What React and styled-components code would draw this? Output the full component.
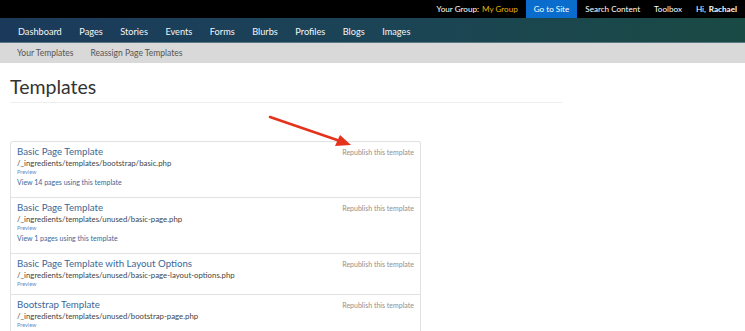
import React from "react";
import styled, { createGlobalStyle } from "styled-components";

const Global = createGlobalStyle`
  html, body { margin: 0; padding: 0; background: #fff; }
  body { font-family: Lato, "Open Sans", Arial, sans-serif; -webkit-font-smoothing: antialiased; }
  * { box-sizing: border-box; }
`;

const Page = styled.div`
  position: relative;
  width: 745px;
  height: 331px;
  overflow: hidden;
`;

const TopBar = styled.div`
  height: 18px;
  background: #000;
  display: flex;
  justify-content: flex-end;
  align-items: stretch;
  padding-right: 1px;
  font-size: 8.1px;
  color: #fff;
`;

const TopItem = styled.div`
  display: flex;
  align-items: center;
  padding: 0 7px;
  background: ${(p) => (p.$active ? "#0a6ccc" : "transparent")};
  ${(p) => p.$active && "padding: 0 8px; margin: 0 1px;"}
`;

const Gold = styled.span`
  color: #e8b400;
  margin-left: 3px;
`;

const Strong = styled.b`
  font-weight: 700;
  margin-left: 3px;
`;

const Nav = styled.nav`
  height: 25px;
  background: linear-gradient(90deg, #1b3a5b 0%, #1b4456 50%, #1a4a44 100%);
  border-bottom: 1px solid #5a7884;
  display: flex;
  align-items: center;
  gap: 17.5px;
  padding: 2px 0 0 18px;
  font-size: 9.2px;
  color: #f4f6f8;
`;

const SubNav = styled.div`
  height: 20px;
  background: #d9d9d9;
  display: flex;
  align-items: center;
  gap: 17px;
  padding-left: 17px;
  font-size: 8.5px;
  color: #555;
`;

const Content = styled.main`
  padding: 0 10px;
`;

const Heading = styled.h1`
  margin: 12px 0 0;
  width: 552px;
  font-size: 19.5px;
  font-weight: 400;
  line-height: 24px;
  color: #333;
  padding-bottom: 3px;
  border-bottom: 1px solid #eee;
`;

const List = styled.ul`
  list-style: none;
  margin: 38px 0 0;
  padding: 0;
  width: 411px;
  border: 1px solid #e2e2e2;
  border-bottom: none;
  border-radius: 3px 3px 0 0;
`;

const Item = styled.li`
  padding: 3px 6px 5px 6px;
  border-bottom: 1px solid #e2e2e2;
`;

const TitleRow = styled.div`
  display: flex;
  justify-content: space-between;
  align-items: center;
  height: 13px;
`;

const Title = styled.a`
  font-size: 9.7px;
  color: #3a6898;
  text-decoration: none;
  line-height: 13px;
`;

const Republish = styled.span`
  font-size: 7px;
  color: #8f8f8f;
`;

const Path = styled.div`
  font-size: 7.8px;
  color: #444;
  line-height: 10px;
`;

const Preview = styled.div`
  font-size: 5.5px;
  color: #5a8fd0;
  line-height: 9px;
`;

const View = styled.div`
  font-size: 7px;
  color: #3a6898;
  line-height: 10px;
  margin-bottom: 5px;
`;

const Arrow = styled.svg`
  position: absolute;
  left: 0;
  top: 0;
  pointer-events: none;
`;

const navItems = ["Dashboard", "Pages", "Stories", "Events", "Forms", "Blurbs", "Profiles", "Blogs", "Images"];

const templates = [
  { title: "Basic Page Template", path: "/_ingredients/templates/bootstrap/basic.php", view: "View 14 pages using this template" },
  { title: "Basic Page Template", path: "/_ingredients/templates/unused/basic-page.php", view: "View 1 pages using this template" },
  { title: "Basic Page Template with Layout Options", path: "/_ingredients/templates/unused/basic-page-layout-options.php" },
  { title: "Bootstrap Template", path: "/_ingredients/templates/unused/bootstrap-page.php" },
];

export default function App() {
  return (
    <Page>
      <Global />
      <TopBar>
        <TopItem>
          Your Group:<Gold>My Group</Gold>
        </TopItem>
        <TopItem $active>Go to Site</TopItem>
        <TopItem>Search Content</TopItem>
        <TopItem>Toolbox</TopItem>
        <TopItem>
          Hi,<Strong>Rachael</Strong>
        </TopItem>
      </TopBar>
      <Nav>
        {navItems.map((n) => (
          <span key={n}>{n}</span>
        ))}
      </Nav>
      <SubNav>
        <span>Your Templates</span>
        <span>Reassign Page Templates</span>
      </SubNav>
      <Content>
        <Heading>Templates</Heading>
        <List>
          {templates.map((t, i) => (
            <Item key={i}>
              <TitleRow>
                <Title>{t.title}</Title>
                <Republish>Republish this template</Republish>
              </TitleRow>
              <Path>{t.path}</Path>
              <Preview>Preview</Preview>
              {t.view && <View>{t.view}</View>}
            </Item>
          ))}
        </List>
      </Content>
      <Arrow width="745" height="331" viewBox="0 0 745 331">
        <line x1="270" y1="117" x2="340" y2="141" stroke="#e5321c" strokeWidth="2.5" strokeLinecap="round" />
        <polygon points="351,145 335,146 340,135" fill="#e5321c" />
      </Arrow>
    </Page>
  );
}
